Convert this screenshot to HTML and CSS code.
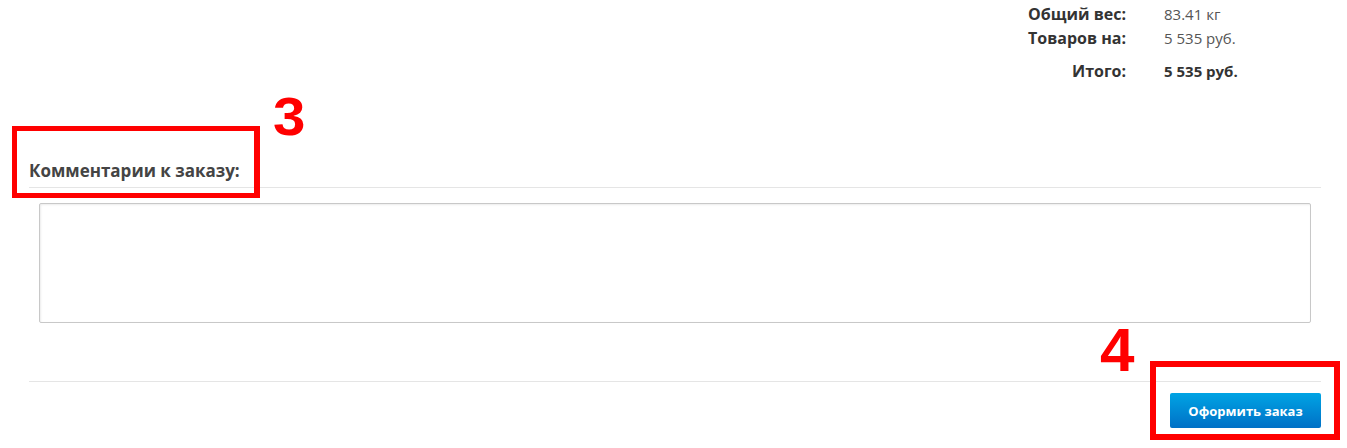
FILE: index.html
```html
<!DOCTYPE html>
<html lang="ru">
<head>
<meta charset="utf-8">
<title>Оформление заказа</title>
<link rel="stylesheet" href="styles.css">
</head>
<body>
<div class="page">
  <div class="summary">
    <div class="label">Общий вес:</div>
    <div class="value">83.41 кг</div>
    <div class="label">Товаров на:</div>
    <div class="value">5 535 руб.</div>
    <div class="label total">Итого:</div>
    <div class="value total">5 535 руб.</div>
  </div>
  <div class="comments">
    <h3 class="comments-title">Комментарии к заказу:</h3>
    <textarea class="comments-input"></textarea>
  </div>
  <div class="footer">
    <button class="order-btn" type="button">Оформить заказ</button>
  </div>
</div>
<div class="mark mark-box mark-box-3"></div>
<div class="mark mark-num mark-num-3">3</div>
<div class="mark mark-box mark-box-4"></div>
<div class="mark mark-num mark-num-4">4</div>
</body>
</html>
```
FILE: styles.css
```css
html, body {
  margin: 0;
  padding: 0;
  background: #fff;
}
body {
  font-family: "Open Sans", "Liberation Sans", sans-serif;
  color: #333;
  position: relative;
  width: 1347px;
  height: 448px;
  overflow: hidden;
}
.page {
  padding: 2px 26px 0 29px;
}
.summary {
  display: grid;
  grid-template-columns: 1fr 157px;
  column-gap: 38px;
  line-height: 24px;
}
.label {
  text-align: right;
  font-weight: 700;
  font-size: 16px;
  color: #333;
}
.value {
  font-size: 15px;
  color: #555;
}
.label.total, .value.total {
  margin-top: 9px;
  font-weight: 700;
  color: #333;
}
.comments {
  margin-top: 78px;
}
.comments-title {
  margin: 0;
  font-size: 17px;
  line-height: 20px;
  font-weight: 700;
  color: #444;
  padding-bottom: 6px;
  border-bottom: 1px solid #e5e5e5;
}
.comments-input {
  display: block;
  box-sizing: border-box;
  margin: 15px 10px 0;
  width: calc(100% - 20px);
  height: 120px;
  border: 1px solid #c8c8c8;
  border-radius: 2px;
  box-shadow: inset 1px 1px 2px rgba(0,0,0,0.08);
  resize: none;
  font-family: inherit;
}
.footer {
  margin-top: 58px;
  border-top: 1px solid #e5e5e5;
  padding-top: 11px;
  display: flex;
  justify-content: flex-end;
}
.order-btn {
  width: 151px;
  height: 35px;
  border: none;
  border-radius: 2px;
  background: linear-gradient(#00a4e4, #0070c6);
  color: #fff;
  font-family: "Open Sans", "Liberation Sans", sans-serif;
  font-weight: 700;
  font-size: 13px;
  padding: 0;
}
.mark {
  position: absolute;
}
.mark-box {
  border: 6px solid #ff0000;
  box-sizing: border-box;
}
.mark-box-3 {
  left: 12px;
  top: 126px;
  width: 248px;
  height: 72px;
  border-width: 5px 6px 5px 5px;
}
.mark-box-4 {
  left: 1150px;
  top: 361px;
  width: 190px;
  height: 79px;
}
.mark-num {
  color: #ff0000;
  font-family: "Liberation Sans", Arial, sans-serif;
  font-weight: 700;
  line-height: 1;
}
.mark-num-3 {
  left: 273px;
  top: 90px;
  font-size: 53px;
  transform: scaleX(1.1);
  transform-origin: left top;
}
.mark-num-4 {
  left: 1100px;
  top: 319px;
  font-size: 62px;
}
```
